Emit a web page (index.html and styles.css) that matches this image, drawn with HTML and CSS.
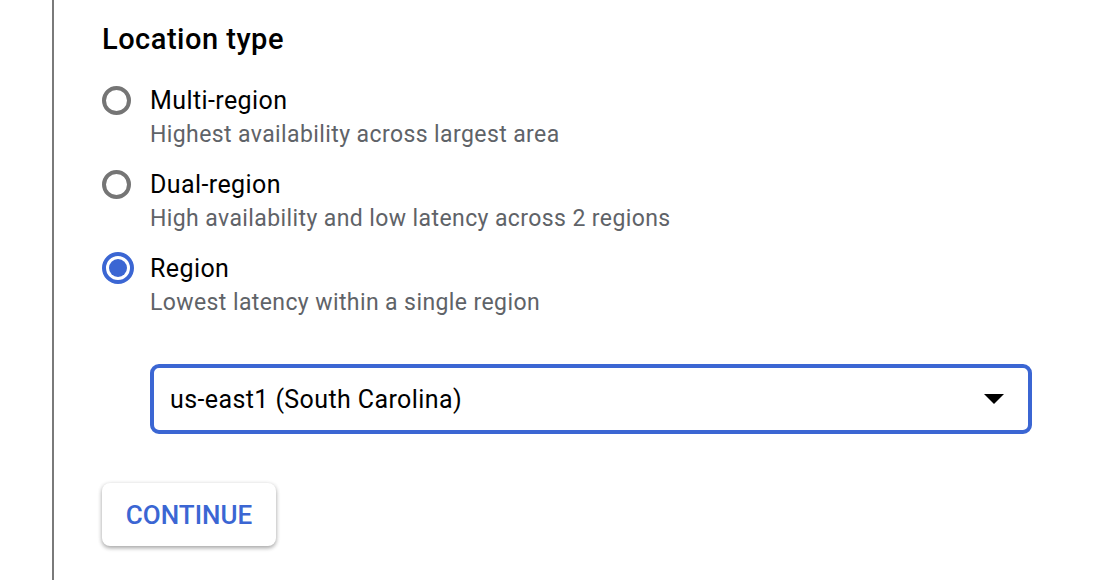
FILE: index.html
```html
<!DOCTYPE html>
<html>
<head>
<meta charset="utf-8">
<link rel="stylesheet" href="styles.css">
</head>
<body>
<div class="page">
  <div class="rail"></div>
  <div class="content">
    <h2 class="title">Location type</h2>
    <div class="options">
      <label class="option">
        <span class="radio"></span>
        <span class="text">
          <span class="label">Multi-region</span>
          <span class="desc">Highest availability across largest area</span>
        </span>
      </label>
      <label class="option">
        <span class="radio"></span>
        <span class="text">
          <span class="label">Dual-region</span>
          <span class="desc">High availability and low latency across 2 regions</span>
        </span>
      </label>
      <label class="option">
        <span class="radio checked"></span>
        <span class="text">
          <span class="label">Region</span>
          <span class="desc">Lowest latency within a single region</span>
        </span>
      </label>
    </div>
    <div class="select">
      <span class="select-value">us-east1 (South Carolina)</span>
      <svg class="arrow" width="20" height="10" viewBox="0 0 20 10"><path d="M0 0 L20 0 L10 10 Z" fill="#000"/></svg>
    </div>
    <button class="btn">CONTINUE</button>
  </div>
</div>
</body>
</html>
```
FILE: styles.css
```css
html, body {
  margin: 0;
  padding: 0;
  background: #fff;
}
body {
  font-family: Roboto, "Liberation Sans", sans-serif;
  color: #202124;
}
.page {
  display: flex;
  height: 580px;
  overflow: hidden;
}
.rail {
  width: 2px;
  margin-left: 52px;
  background: #7a7a7a;
  flex: none;
}
.content {
  padding-left: 48px;
  padding-top: 21px;
  flex: 1;
}
.title {
  margin: 0;
  font-size: 29px;
  font-weight: 500;
  line-height: 36px;
  letter-spacing: 0.5px;
  color: #000;
}
.options {
  margin-top: 27px;
  display: flex;
  flex-direction: column;
  gap: 16px;
}
.option {
  display: grid;
  grid-template-columns: 48px 1fr;
  align-items: start;
}
.radio {
  width: 29px;
  height: 29px;
  box-sizing: border-box;
  border: 4px solid #757575;
  border-radius: 50%;
  margin-top: 2px;
  position: relative;
}
.radio.checked {
  width: 32px;
  height: 32px;
  margin-top: 0;
  border-color: #3b66d3;
}
.radio.checked::after {
  content: "";
  position: absolute;
  left: 3px;
  top: 3px;
  width: 18px;
  height: 18px;
  border-radius: 50%;
  background: #3b66d3;
}
.text {
  display: flex;
  flex-direction: column;
}
.label {
  font-size: 25px;
  line-height: 34px;
  letter-spacing: 0.4px;
  color: #000;
}
.desc {
  font-size: 23px;
  line-height: 34px;
  letter-spacing: 0.4px;
  color: #5f6368;
}
.select {
  margin-top: 44px;
  margin-left: 48px;
  width: 882px;
  height: 70px;
  box-sizing: border-box;
  border: 4px solid #3b66d3;
  border-radius: 9px;
  display: flex;
  align-items: center;
  justify-content: space-between;
  padding: 0 24px 0 16px;
}
.select-value {
  font-size: 25px;
  letter-spacing: 0.4px;
  color: #000;
}
.arrow {
  display: block;
}
.btn {
  margin-top: 49px;
  width: 174px;
  height: 63px;
  border: none;
  border-radius: 8px;
  background: #fff;
  box-shadow: 0 2px 4px rgba(0,0,0,0.3), 0 1px 5px rgba(0,0,0,0.1);
  font-family: Roboto, "Liberation Sans", sans-serif;
  font-size: 26px;
  font-weight: 500;
  color: #3b66d3;
  letter-spacing: 0;
  padding: 0;
}
```
